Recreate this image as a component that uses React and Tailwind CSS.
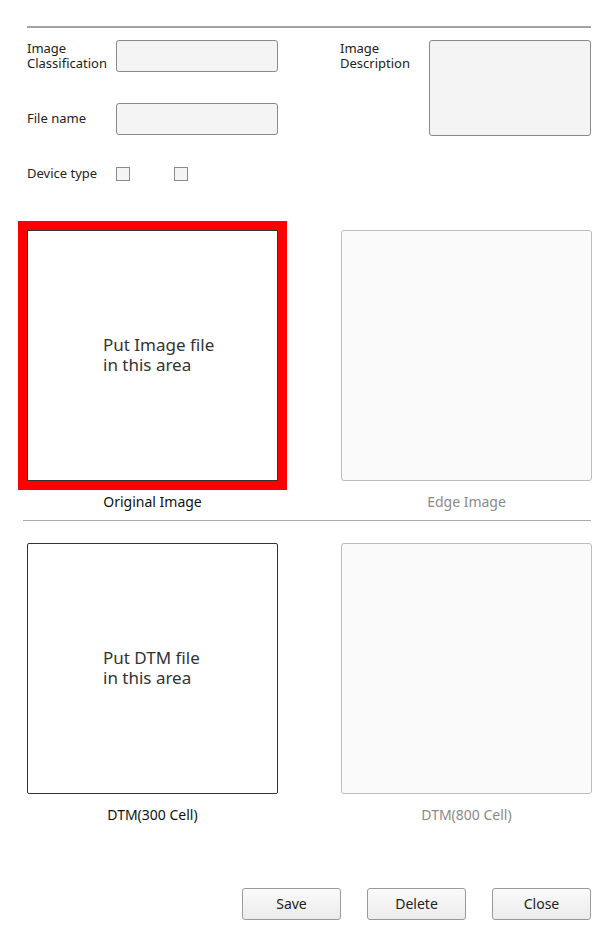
const font = { fontFamily: '"Noto Sans", "Liberation Sans", sans-serif' }

function Field({ label, tall = false }) {
  return (
    <div className="flex items-start">
      <label className="w-[89px] pt-[1px] text-[13px] leading-[15px] text-[#222]">{label}</label>
      <div className={
        'w-[162px] rounded-[3px] border border-[#8a8a8a] bg-[#f4f4f4] ' + (tall ? 'h-[96px]' : 'h-[32px]')
      } />
    </div>
  )
}

function DropBox({ text, caption, active = false, highlight = false }) {
  return (
    <div className="flex w-[251px] flex-col items-center">
      <div className={
        active
          ? 'flex h-[251px] w-[251px] items-center border border-[#333] bg-white pl-[75px] ' + (highlight ? 'outline-[9px] outline-solid outline-[#ff0000]' : 'rounded-[2px]')
          : 'h-[251px] w-[251px] rounded-[3px] border border-[#bdbdbd] bg-[#fafafa]'
      }>
        {text && <p className="text-[17px] leading-[20px] text-[#333]">{text[0]}<br />{text[1]}</p>}
      </div>
      <p className={'mt-[13px] text-[14px] leading-[16px] ' + (active ? 'text-[#111]' : 'text-[#8a8a8a]')}>{caption}</p>
    </div>
  )
}

export default function App() {
  return (
    <div className="min-h-[935px] w-[614px] bg-white" style={font}>
      <div className="pl-[27px] pr-[23px] pt-[26px]">
        <div className="h-[2px] bg-[#a3a3a3]" />

        <div className="mt-[12px] flex">
          <div className="w-[314px]">
            <Field label={<>Image<br />Classification</>} />
            <div className="mt-[31px] flex items-center">
              <label className="w-[89px] text-[13px] text-[#222]">File name</label>
              <div className="h-[32px] w-[162px] rounded-[3px] border border-[#8a8a8a] bg-[#f4f4f4]" />
            </div>
            <div className="mt-[29px] flex items-center">
              <label className="w-[89px] text-[13px] text-[#222]">Device type</label>
              <span className="h-[14px] w-[14px] border border-[#8a8a8a] bg-[#f4f4f4]" />
              <span className="ml-[44px] h-[14px] w-[14px] border border-[#8a8a8a] bg-[#f4f4f4]" />
            </div>
          </div>
          <Field label={<>Image<br />Description</>} tall />
        </div>

        <div className="mt-[46px] flex gap-[63px]">
          <DropBox text={['Put Image file', 'in this area']} caption="Original Image" active highlight />
          <DropBox caption="Edge Image" />
        </div>

        <div className="-ml-[4px] mt-[10px] h-[1px] bg-[#aaa]" />

        <div className="mt-[22px] flex gap-[63px]">
          <DropBox text={['Put DTM file', 'in this area']} caption="DTM(300 Cell)" active />
          <DropBox caption="DTM(800 Cell)" />
        </div>

        <div className="mt-[65px] flex justify-end gap-[26px]">
          {['Save', 'Delete', 'Close'].map((b) => (
            <button key={b} type="button"
              className="h-[32px] w-[99px] rounded-[3px] border border-[#999] bg-gradient-to-b from-[#fafafa] to-[#ececec] text-[14px] text-[#222]">
              {b}
            </button>
          ))}
        </div>
      </div>
    </div>
  )
}
